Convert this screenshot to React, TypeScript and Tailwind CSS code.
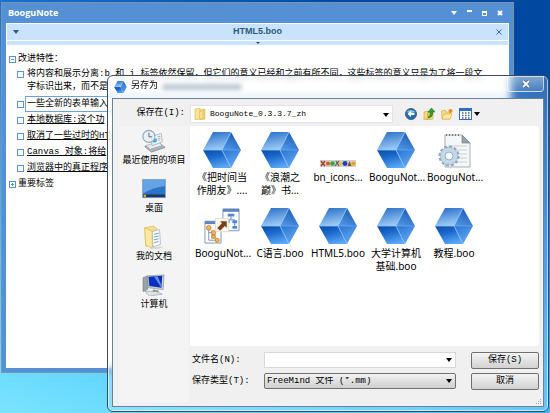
import { useState } from 'react';
import type { ReactNode } from 'react';

type FileKind = 'boo' | 'strip' | 'config' | 'map';

const notes = [
    { text: '一些全新的表单输入', active: true },
    { text: '本地数据库:这个功', active: false },
    { text: '取消了一些过时的HT', active: false },
    { text: 'Canvas 对象:将给', active: false },
    { text: '浏览器中的真正程序', active: false },
];

const files: { name: string; kind: FileKind }[] = [
    { name: '《把时间当作朋友》....', kind: 'boo' },
    { name: '《浪潮之巅》书...', kind: 'boo' },
    { name: 'bn_icons...', kind: 'strip' },
    { name: 'BooguNot...', kind: 'boo' },
    { name: 'BooguNot...', kind: 'config' },
    { name: 'BooguNot...', kind: 'map' },
    { name: 'C语言.boo', kind: 'boo' },
    { name: 'HTML5.boo', kind: 'boo' },
    { name: '大学计算机基础.boo', kind: 'boo' },
    { name: '教程.boo', kind: 'boo' },
];

function Gem({ className }: { className: string }) {
    return (
        <svg viewBox="0 0 38 36" className={className}>
            <defs>
                <linearGradient id="gemTop" x1="0.2" y1="0" x2="0.5" y2="1">
                    <stop offset="0" stopColor="#2a6fc8" />
                    <stop offset="1" stopColor="#9fcdf8" />
                </linearGradient>
                <linearGradient id="gemLeft" x1="0.2" y1="0" x2="0.6" y2="1">
                    <stop offset="0" stopColor="#0a4fae" />
                    <stop offset="0.4" stopColor="#1c69cc" />
                    <stop offset="1" stopColor="#5aa8f6" />
                </linearGradient>
                <linearGradient id="gemUpper" x1="0.8" y1="0" x2="0.3" y2="1">
                    <stop offset="0" stopColor="#1656b0" />
                    <stop offset="1" stopColor="#4f94e4" />
                </linearGradient>
                <linearGradient id="gemLower" x1="0" y1="0" x2="0.6" y2="1">
                    <stop offset="0" stopColor="#2a74d4" />
                    <stop offset="1" stopColor="#61a9f2" />
                </linearGradient>
            </defs>
            <path d="M10 0H28L19 18H0Z" fill="url(#gemTop)" />
            <path d="M28 0L38 18H19Z" fill="url(#gemUpper)" />
            <path d="M38 18L28 36L19 18Z" fill="url(#gemLower)" />
            <path d="M0 18H19L28 36H10Z" fill="url(#gemLeft)" />
            <path d="M0 18H19L28 0M19 18L28 36" fill="none" stroke="#8cc4f8" strokeWidth="0.8" />
            <path d="M19 18H38" stroke="#7ab6f2" strokeWidth="0.5" />
        </svg>
    );
}

function StripIcon() {
    return (
        <svg viewBox="0 0 36 36" className="h-9 w-9">
            <rect x="0" y="28" width="36" height="7" fill="#d2cfc6" />
            <path d="M1 29l4 5M5 29l-4 5" stroke="#a33b2c" strokeWidth="1.4" />
            <circle cx="8" cy="31.5" r="2" fill="#d8572a" />
            <circle cx="12.5" cy="31.5" r="2.3" fill="#35a83b" />
            <path d="M15 34l4-5M16 29l3 5" stroke="#5b5b5b" strokeWidth="1.2" />
            <circle cx="21" cy="31.5" r="1.8" fill="#e8c33a" />
            <circle cx="25" cy="31.5" r="2.4" fill="#1c3fc0" />
            <path d="M27.5 34l2-5l2 5z" fill="#8d4a26" />
            <circle cx="33.5" cy="31.5" r="2" fill="#f09a2c" />
        </svg>
    );
}

function ConfigIcon() {
    return (
        <svg viewBox="0 0 36 36" className="h-9 w-9">
            <path d="M9 3H26L34 11V35H9Z" fill="#f5f6f7" stroke="#a9aeb3" />
            <path d="M26 3V11H34Z" fill="#9aa2aa" stroke="#6f7880" strokeWidth="0.6" />
            <path d="M10 3H25" stroke="#777" strokeDasharray="1 2" strokeWidth="2" />
            <path d="M12 14H31M12 18H31M12 22H31M12 26H31M12 30H31" stroke="#c9cfd5" />
            <circle cx="13" cy="24" r="9" fill="none" stroke="#8ba6bd" strokeWidth="3" strokeDasharray="2.7 2" />
            <circle cx="13" cy="24" r="6.5" fill="none" stroke="#c3d8e8" strokeWidth="4.5" />
            <circle cx="13" cy="24" r="8.7" fill="none" stroke="#93adc2" strokeWidth="0.6" />
            <circle cx="13" cy="24" r="4" fill="#f7fafc" stroke="#7f9bb3" strokeWidth="0.8" />
        </svg>
    );
}

function MapIcon() {
    return (
        <svg viewBox="0 0 38 38" className="h-9 w-[38px]">
            <path d="M20 1H37V24H20Z" fill="#fff" stroke="#7d93b2" />
            <path d="M20 1H37V4H20Z" fill="#5b84c4" />
            <path d="M25 6h7v3h-7zM22 13h5v3h-5zM30 13h5v3h-5zM30 19h5v3h-5z" fill="#4f86d6" />
            <path d="M28.5 9v3M24.5 12.5h8M32.5 16v3" stroke="#4f86d6" fill="none" />
            <path d="M1 14H18V37H1Z" fill="#fff" stroke="#7d93b2" />
            <path d="M1 14H18V17H1Z" fill="#5b84c4" />
            <path d="M5 21v13h8M5 26h5" stroke="#7d93b2" fill="none" />
            <circle cx="5" cy="21" r="2.5" fill="#f2b45c" stroke="#b86e1c" strokeWidth="0.7" />
            <path d="M8 24h4v4h-4zM8 29h4v3h-4z" fill="#f2b45c" stroke="#b86e1c" strokeWidth="0.7" />
            <circle cx="14" cy="34" r="2.2" fill="#f2b45c" stroke="#b86e1c" strokeWidth="0.7" />
            <path d="M12 11H26V25H12Z" fill="#fbf6ee" stroke="#d6cfc4" strokeWidth="0.7" />
            <path d="M14 21l5-5l-2-2h7v7l-2-2l-5 5z" fill="#7b3f16" />
        </svg>
    );
}

function FileIcon({ kind }: { kind: FileKind }) {
    if (kind === 'strip') return <StripIcon />;
    if (kind === 'config') return <ConfigIcon />;
    if (kind === 'map') return <MapIcon />;
    return <Gem className="h-9 w-[38px]" />;
}

function RecentIcon() {
    return (
        <svg viewBox="0 0 26 26" className="size-6">
            <path d="M3 19L20 16L25 20L10 25Z" fill="#aeb6bd" stroke="#6f777e" strokeWidth="0.7" />
            <path d="M4 18L18 14L22 18L9 22Z" fill="#e6ebef" stroke="#8b949b" strokeWidth="0.6" />
            <path d="M10 8L21 5L22 14L11 18Z" fill="#f6fafd" stroke="#8d9aa5" strokeWidth="0.7" />
            <path d="M12 11L16 10V14L12 15Z" fill="#3fa6dd" />
            <path d="M17 8h3M17 10h3M17 12h3" stroke="#7c93a5" strokeWidth="0.8" />
            <circle cx="7.5" cy="8" r="6.5" fill="#e4eff6" fillOpacity="0.85" stroke="#94a8b6" strokeWidth="1.2" />
            <path d="M7.5 4V8.5H11" stroke="#4d6677" fill="none" />
        </svg>
    );
}

function DesktopIcon() {
    return (
        <svg viewBox="0 0 26 22" className="h-5 w-6">
            <rect x="0.5" y="0.5" width="25" height="20" fill="#2d73c8" stroke="#8ba4bd" />
            <path d="M1 1H25V8Q12 9 1 16Z" fill="#64a3e6" />
            <path d="M1 17H25V20H1Z" fill="#17375f" />
            <circle cx="3" cy="18.5" r="1.5" fill="#e3a33a" />
        </svg>
    );
}

function DocumentsIcon() {
    return (
        <svg viewBox="0 0 24 26" className="size-6">
            <path d="M8 24L23 23L18 26H8Z" fill="#d9d9d9" />
            <path d="M2 3L12 1L15 4V22L3 23Z" fill="#f6dd8a" stroke="#d8b655" strokeWidth="0.7" />
            <path d="M10 7L18 5L19 21L11 24Z" fill="#f7fbff" stroke="#8fa7bd" strokeWidth="0.7" />
            <path d="M12 10l5-1M12 13l5-1M12 16l5-1M12 19l5-1" stroke="#6c9dcc" />
            <path d="M2 3L10 7V25L3 22Z" fill="#fbe9a8" stroke="#d8b655" strokeWidth="0.7" />
        </svg>
    );
}

function ComputerIcon() {
    return (
        <svg viewBox="0 0 26 24" className="h-[22px] w-6">
            <path d="M1 4L6 2V17L1 19Z" fill="#9aa4ac" stroke="#6a737a" strokeWidth="0.6" />
            <path d="M6 2L24 1L23 17L7 15Z" fill="#c5ced5" stroke="#79828a" strokeWidth="0.6" />
            <path d="M7 3L22 2L21 15L8 13Z" fill="#0d2fb8" />
            <path d="M13 3L17 2.5L21 12V15Z" fill="#5d8cf0" />
            <path d="M12 17L18 18V20H11Z" fill="#87919a" />
            <path d="M3 19L15 19L22 22L8 24Z" fill="#dde3e8" stroke="#8c959c" strokeWidth="0.6" />
        </svg>
    );
}

function Caret({ className = 'fill-black' }: { className?: string }) {
    return (
        <svg viewBox="0 0 6 4" className={`h-1 w-1.5 ${className}`}>
            <path d="M0 0H6L3 4Z" />
        </svg>
    );
}

function FolderIcon() {
    return (
        <svg viewBox="0 0 12 12" className="size-3">
            <path d="M1 1L6 0V11L1 12Z" fill="#f9e49a" stroke="#d9b44c" strokeWidth="0.6" />
            <path d="M6 2L11 1V11L6 12Z" fill="#f3cf69" stroke="#d9b44c" strokeWidth="0.6" />
            <path d="M7 4V10" stroke="#fff6d2" />
        </svg>
    );
}

function Toolbar() {
    return (
        <div className="flex items-center gap-1.5">
            <button aria-label="后退" className="size-3">
                <svg viewBox="0 0 12 12">
                    <circle cx="6" cy="6" r="5.5" fill="#1f6fb8" stroke="#34495e" strokeWidth="0.8" />
                    <path d="M1.5 4Q6 0 10.5 4Q6 6 1.5 4Z" fill="#8cc3ea" />
                    <path d="M2.5 6L6 3V5H9.5V7H6V9Z" fill="#fff" />
                </svg>
            </button>
            <button aria-label="向上一级" className="size-3">
                <svg viewBox="0 0 12 12">
                    <path d="M1 4L5 3V11L1 12ZM5 4L10 5V11L4 12Z" fill="#f4dc7c" stroke="#c9a43c" strokeWidth="0.6" />
                    <path d="M5 9Q8 8 7 4H5L8.5 0L12 4H10Q10 9 6 10Z" fill="#2fa12f" stroke="#176417" strokeWidth="0.5" />
                </svg>
            </button>
            <button aria-label="新建文件夹" className="size-3">
                <svg viewBox="0 0 12 12">
                    <path d="M0.5 3L4 2L5 4H9V11H1Z" fill="#f4dc7c" stroke="#d3a83c" strokeWidth="0.6" />
                    <path d="M1 11L3 6H11L9 11Z" fill="#fbeaa4" stroke="#d3a83c" strokeWidth="0.6" />
                    <circle cx="9.5" cy="3" r="2" fill="#f08a24" />
                </svg>
            </button>
            <button aria-label="查看" className="flex items-center gap-0.5">
                <svg viewBox="0 0 13 12" className="h-3 w-[13px]">
                    <rect x="0.5" y="0.5" width="12" height="11" fill="#fff" stroke="#2f6cc4" />
                    <path d="M1 1H12V3H1Z" fill="#2f6cc4" />
                    <path d="M3 5h1.5M6 5h1.5M9 5h1.5M3 7.5h1.5M6 7.5h1.5M9 7.5h1.5M3 10h1.5M6 10h1.5M9 10h1.5" stroke="#55606c" strokeWidth="1.3" />
                </svg>
                <Caret />
            </button>
        </div>
    );
}

function Box() {
    return <span className="size-[7px] shrink-0 border border-[#5c94d8]" />;
}

function Branch({ sign, children }: { sign: '+' | '-'; children: ReactNode }) {
    return (
        <div className="flex h-4 items-center gap-0.5">
            <svg viewBox="0 0 7 7" className="size-[7px]">
                <rect x="0.5" y="0.5" width="6" height="6" fill="#fff" stroke="#5c94d8" />
                <path d={sign === '+' ? 'M2 3.5H5M3.5 2V5' : 'M2 3.5H5'} stroke="#5c94d8" />
            </svg>
            <span>{children}</span>
        </div>
    );
}

function NoteWindow() {
    return (
        <section className="absolute top-0.5 right-9 bottom-10 left-px flex flex-col border border-[#7d93a8] bg-[#5590d4] px-1 pb-1">
            <header className="flex h-5 shrink-0 items-center justify-between pr-1.5 pl-0.5">
                <h1 className="font-['Open_Sans'] text-[9px] font-bold text-white">BooguNote</h1>
                <div className="flex items-center gap-2.5 text-white">
                    <button aria-label="菜单"><Caret className="fill-white" /></button>
                    <button aria-label="最小化" className="h-1.5 w-[5px] border-t-2 border-white" />
                    <button aria-label="最大化" className="size-[5px] border border-t-2 border-white" />
                    <button aria-label="关闭">
                        <svg viewBox="0 0 6 6" className="size-1.5"><path d="M1 1L5 5M5 1L1 5" stroke="#fff" strokeWidth="2" /></svg>
                    </button>
                </div>
            </header>
            <div className="min-h-0 flex-1 overflow-hidden bg-white p-px">
                <div className="flex h-4 items-center justify-between bg-[#cae3fc] px-1.5">
                    <Caret className="fill-[#2b5a8c]" />
                    <h2 className="font-['Liberation_Sans'] text-[9px] font-bold text-[#2b5a7c]">HTML5.boo</h2>
                    <button aria-label="关闭标签">
                        <svg viewBox="0 0 6 6" className="size-1.5"><path d="M0.5 0.5L5.5 5.5M5.5 0.5L0.5 5.5" stroke="#2b5a8c" strokeWidth="0.9" /></svg>
                    </button>
                </div>
                <div className="mt-px flex h-1 items-center justify-center bg-[#cae3fc]">
                    <svg viewBox="0 0 4 2" className="h-0.5 w-1"><path d="M0 0H4L2 2Z" fill="#23507c" /></svg>
                </div>
                <div className="px-0.5 pt-1.5 text-[9px] leading-[13px] whitespace-nowrap">
                    <Branch sign="-">改进特性：</Branch>
                    <ul className="pl-2">
                        <li className="flex gap-[3px] pt-px pb-0.5">
                            <span className="flex h-[13px] items-center"><Box /></span>
                            <p>
                                将内容和展示分离:b 和 i 标签依然保留，但它们的意义已经和之前有所不同，这些标签的意义只是为了将一段文
                                <br />
                                字标识出来，而不是
                            </p>
                        </li>
                        {notes.map((note) => (
                            <li key={note.text} className="flex items-center gap-px">
                                <Box />
                                <span className={note.active ? 'flex-1 border border-[#6da0dc] px-px leading-[14px]' : 'px-0.5 leading-4 underline'}>
                                    {note.text}
                                </span>
                            </li>
                        ))}
                    </ul>
                    <Branch sign="+">重要标签</Branch>
                </div>
            </div>
        </section>
    );
}

const places = [
    { label: '最近使用的项目', icon: <RecentIcon /> },
    { label: '桌面', icon: <DesktopIcon /> },
    { label: '我的文档', icon: <DocumentsIcon /> },
    { label: '计算机', icon: <ComputerIcon /> },
];

function SaveDialog() {
    const [fileName, setFileName] = useState('');

    return (
        <section
            role="dialog"
            aria-label="另存为"
            className="absolute top-[75px] right-px bottom-px left-[107px] flex flex-col overflow-hidden rounded-md border border-[#3b4a5a] bg-white/20 px-1 pb-1 shadow-[inset_0_0_0_1px_rgba(255,255,255,0.6)] backdrop-blur-[3px]"
        >
            <header className="flex h-[22px] shrink-0 items-start justify-between pl-0.5">
                <div className="flex h-[22px] items-center gap-1">
                    <Gem className="h-3 w-[13px]" />
                    <h2 className="text-[9px]">另存为</h2>
                    <span className="h-1.5 w-20 rounded-full bg-[#8ea4b8]/60 blur-[2px]" />
                </div>
                <button aria-label="关闭" className="flex h-4 w-[37px] items-center justify-center rounded-b border border-t-0 border-white/60 bg-linear-to-b from-white/40 to-white/10">
                    <svg viewBox="0 0 8 8" className="size-2">
                        <path d="M1 1L7 7M7 1L1 7" stroke="#3d5573" strokeWidth="3" />
                        <path d="M1 1L7 7M7 1L1 7" stroke="#fff" strokeWidth="1.8" />
                    </svg>
                </button>
            </header>

            <div className="relative grid min-h-0 flex-1 grid-cols-[70px_1fr] grid-rows-[24px_1fr] gap-x-px border border-[#6c8196] bg-[#f0f0f0] pt-[3px] pr-1 pb-1 pl-1.5">
                <label htmlFor="look-in" className="self-center pr-1 text-right text-[9px]">保存在(I):</label>
                <div className="flex items-center gap-3">
                    <div className="relative w-[203px]">
                        <span className="pointer-events-none absolute top-[3px] left-1"><FolderIcon /></span>
                        <select id="look-in" className="block h-[18px] w-full appearance-none border border-[#e2e3ea] bg-white pl-[19px] font-['Liberation_Mono'] text-[8px]">
                            <option>BooguNote_0.3.3.7_zh</option>
                        </select>
                        <span className="pointer-events-none absolute top-2 right-1 flex"><Caret /></span>
                    </div>
                    <Toolbar />
                </div>

                <nav className="flex flex-col items-center gap-2 bg-[#f4f4f4] pt-[3px]">
                    {places.map((place) => (
                        <button key={place.label} className="flex flex-col items-center text-[9px] leading-4">
                            <span className="flex h-6 items-center">{place.icon}</span>
                            {place.label}
                        </button>
                    ))}
                </nav>

                <div className="flex min-h-0 flex-col">
                    <ul className="grid min-h-0 flex-1 grid-cols-[repeat(auto-fill,58px)] content-start gap-y-1 bg-white px-[3px] pt-1.5">
                        {files.map((file, i) => (
                            <li key={i} className="flex h-[72px] flex-col items-center gap-[3px]">
                                <FileIcon kind={file.kind} />
                                <span className="w-[54px] text-center font-['Noto_Sans','Noto_Sans_CJK_SC',sans-serif] text-[10px] leading-[13px]">{file.name}</span>
                            </li>
                        ))}
                    </ul>
                    <form className="grid grid-cols-[74px_1fr_68px] gap-y-1 pt-1.5 pb-3 text-[9px]" onSubmit={(e) => e.preventDefault()}>
                        <label htmlFor="file-name" className="self-center pl-0.5">文件名(N):</label>
                        <div className="relative mr-[15px]">
                            <input id="file-name" value={fileName} onChange={(e) => setFileName(e.target.value)} className="block h-4 w-full border border-[#d4d7dc] bg-white px-1" />
                            <span className="pointer-events-none absolute top-1.5 right-1 flex"><Caret /></span>
                        </div>
                        <button type="submit" className="h-[17px] rounded-xs border border-[#707070] bg-linear-to-b from-[#f4f4f4] to-[#d2d2d2] leading-none">保存(S)</button>
                        <label htmlFor="file-type" className="self-center pl-0.5">保存类型(T):</label>
                        <div className="relative mr-[15px]">
                            <select id="file-type" className="block h-4 w-full appearance-none rounded-xs border border-[#707070] bg-linear-to-b from-[#f2f2f2] to-[#cfcfcf] px-0.5 leading-none">
                                <option>FreeMind 文件 (*.mm)</option>
                            </select>
                            <span className="pointer-events-none absolute top-1.5 right-1 flex"><Caret /></span>
                        </div>
                        <button type="button" className="h-[17px] rounded-xs border border-[#707070] bg-linear-to-b from-[#f4f4f4] to-[#d2d2d2] leading-none">取消</button>
                    </form>
                </div>
                <svg viewBox="0 0 6 6" className="absolute right-px bottom-px size-1.5">
                    <path d="M4 0h1v1h-1zM2 2h1v1h-1zM4 2h1v1h-1zM0 4h1v1h-1zM2 4h1v1h-1zM4 4h1v1h-1z" fill="#a8a8a8" />
                </svg>
            </div>
        </section>
    );
}

export default function App() {
    return (
        <main className="relative h-screen w-full overflow-hidden bg-[linear-gradient(20deg,#7be4ff_0%,#45c4fc_28%,#1f80e6_60%,#0048a0_88%)] font-['Liberation_Mono','Noto_Sans_CJK_SC',monospace] text-black">
            <NoteWindow />
            <SaveDialog />
        </main>
    );
}
